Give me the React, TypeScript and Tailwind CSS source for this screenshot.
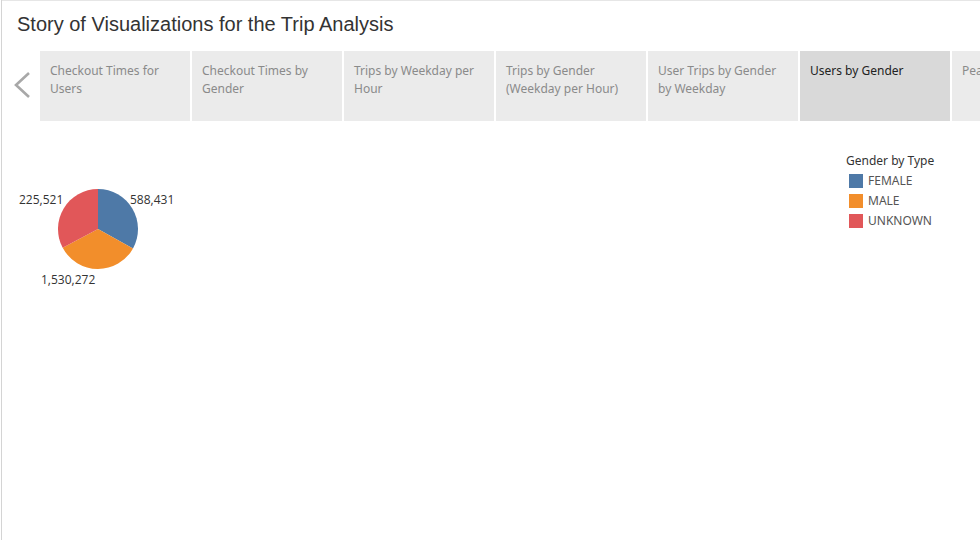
const tabs = [
  'Checkout Times for Users',
  'Checkout Times by Gender',
  'Trips by Weekday per Hour',
  'Trips by Gender (Weekday per Hour)',
  'User Trips by Gender by Weekday',
  'Users by Gender',
  'Peak Hours',
]

const legend = [
  { label: 'FEMALE', color: 'bg-[#4e79a7]' },
  { label: 'MALE', color: 'bg-[#f28e2b]' },
  { label: 'UNKNOWN', color: 'bg-[#e15759]' },
]

// pie slice path, angles in degrees clockwise from 12 o'clock
const slice = (a0: number, a1: number, r = 40) => {
  const p = (a: number) => {
    const rad = (a * Math.PI) / 180
    return `${(r + r * Math.sin(rad)).toFixed(2)} ${(r - r * Math.cos(rad)).toFixed(2)}`
  }
  const large = a1 - a0 > 180 ? 1 : 0
  return `M ${r} ${r} L ${p(a0)} A ${r} ${r} 0 ${large} 1 ${p(a1)} Z`
}

export default function App() {
  return (
    <div className="w-[980px] h-[540px] bg-white overflow-hidden flex">
      {/* left frame edge */}
      <div className="w-[2px] shrink-0 h-full border-r border-[#d4d4d4]" />
      <div className="flex-1 min-w-0 flex flex-col border-t border-[#e6e6e6]">
        {/* Title */}
        <div className="h-[50px] pl-[15px] pt-[10px]">
          <h1 className="text-[20px] leading-[26px] text-[#333] font-['Liberation_Sans',Arial,sans-serif]">
            Story of Visualizations for the Trip Analysis
          </h1>
        </div>

        {/* Story points */}
        <div className="flex h-[70px] overflow-hidden font-['Noto_Sans','Open_Sans',sans-serif]">
          <div className="w-[38px] shrink-0 flex items-center">
            <svg className="ml-[11px] mb-[2px]" width="18" height="28" viewBox="0 0 18 28">
              <polyline points="16,2 3,14 16,26" fill="none" stroke="#a8a8a8" strokeWidth="2.6" />
            </svg>
          </div>
          <div className="flex gap-[2px]">
            {tabs.map((t, i) => (
              <div
                key={t}
                className={`w-[150px] shrink-0 px-[10px] pt-[11px] text-[12px] leading-[18px] ${
                  i === 5 ? 'bg-[#d9d9d9] text-[#222]' : 'bg-[#ebebeb] text-[#8a8a8a]'
                }`}
              >
                {t}
              </div>
            ))}
          </div>
        </div>

        {/* Viz */}
        <div className="flex-1 flex justify-between font-['Open_Sans','Noto_Sans',sans-serif]">
          <div className="relative w-[200px] h-[180px]">
            <svg className="absolute left-[56px] top-[68px]" width="80" height="80" viewBox="0 0 80 80">
              <path d={slice(0, 119)} fill="#4e79a7" />
              <path d={slice(119, 242)} fill="#f28e2b" />
              <path d={slice(242, 360)} fill="#e15759" />
            </svg>
            <span className="absolute left-[17px] top-[71px] text-[12px] leading-[16px] text-[#333]">225,521</span>
            <span className="absolute left-[128px] top-[71px] text-[12px] leading-[16px] text-[#333]">588,431</span>
            <span className="absolute left-[39px] top-[151px] text-[12px] leading-[16px] text-[#333]">1,530,272</span>
          </div>

          <div className="w-[134px] pt-[32px] font-['Noto_Sans','Open_Sans',sans-serif]">
            <div className="text-[12px] leading-[16px] text-[#333] mb-[5px]">Gender by Type</div>
            <div className="flex flex-col gap-[6px] pl-[3px]">
              {legend.map((l) => (
                <div key={l.label} className="flex items-center gap-[5px]">
                  <span className={`w-[14px] h-[14px] ${l.color}`} />
                  <span className="text-[12px] leading-[14px] text-[#555]">{l.label}</span>
                </div>
              ))}
            </div>
          </div>
        </div>
      </div>
    </div>
  )
}
